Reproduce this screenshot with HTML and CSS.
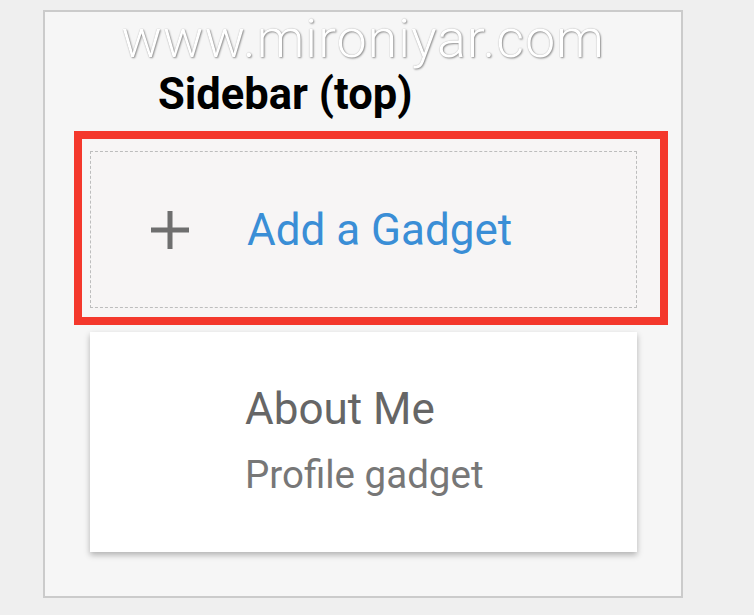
FILE: index.html
```html
<!DOCTYPE html>
<html lang="en">
<head>
<meta charset="utf-8">
<title>Sidebar (top)</title>
<link rel="stylesheet" href="styles.css">
</head>
<body>
<div class="panel">
  <div class="watermark">www.mironiyar.com</div>
  <h2 class="section-title">Sidebar (top)</h2>
  <div class="highlight">
    <div class="add-gadget">
      <svg class="plus" viewBox="0 0 40 40" width="40" height="40" aria-hidden="true">
        <path d="M20 1 V39 M1 20 H39" stroke="#6f6f6f" stroke-width="5" fill="none"/>
      </svg>
      <span class="add-label">Add a Gadget</span>
    </div>
  </div>
  <div class="gadget-card">
    <div class="gadget-name">About Me</div>
    <div class="gadget-type">Profile gadget</div>
  </div>
</div>
</body>
</html>
```

FILE: styles.css
```css
html, body {
  margin: 0;
  padding: 0;
}
body {
  background: #efefef;
  font-family: Roboto, "Noto Sans", "Liberation Sans", sans-serif;
  width: 754px;
  height: 615px;
  overflow: hidden;
}
.panel {
  position: relative;
  box-sizing: border-box;
  width: 640px;
  margin: 10px 0 0 43px;
  border: 2px solid #cbcbcb;
  background: #f6f6f6;
  padding: 57px 44px 44px 45px;
}
.watermark {
  position: absolute;
  top: 0;
  left: 0;
  right: 0;
  text-align: center;
  font-family: Roboto, sans-serif;
  font-weight: 300;
  font-size: 54px;
  line-height: 54px;
  letter-spacing: 0.8px;
  color: #ffffff;
  text-shadow: 1px 1px 2px rgba(0, 0, 0, 0.4), 0 0 1px rgba(0, 0, 0, 0.3);
  white-space: nowrap;
}
.section-title {
  margin: 0 0 10px 68px;
  font-size: 43.5px;
  line-height: 52px;
  font-weight: 700;
  color: #000;
}
.highlight {
  border: 8px solid #f4382c;
  background: #f7f5f5;
  padding: 12px 23px 9px 8px;
  margin: 0 -31px 0 -16px;
}
.add-gadget {
  box-sizing: border-box;
  height: 157px;
  border: 1px dashed #bdbdbd;
  display: flex;
  align-items: center;
  padding-left: 59px;
}
.plus {
  display: block;
  flex: none;
}
.add-label {
  margin-left: 57px;
  font-size: 44px;
  line-height: 52px;
  color: #3a8ed6;
}
.gadget-card {
  box-sizing: border-box;
  height: 220px;
  margin-top: 7px;
  background: #ffffff;
  box-shadow: 0 3px 6px rgba(0, 0, 0, 0.28);
  padding: 51px 0 0 155px;
}
.gadget-name {
  font-size: 44px;
  line-height: 52px;
  color: #666666;
}
.gadget-type {
  margin-top: 18px;
  font-size: 38.5px;
  line-height: 44px;
  color: #777777;
}
```
